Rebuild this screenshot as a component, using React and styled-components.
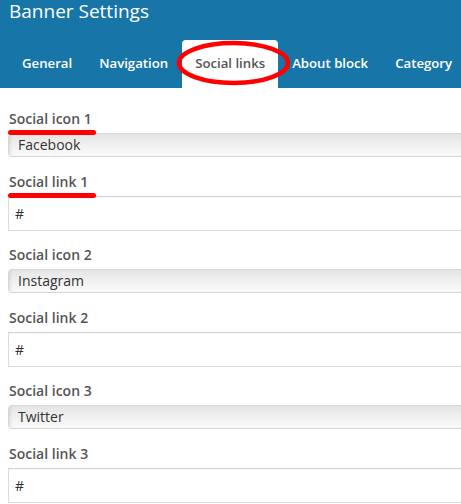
import styled, { createGlobalStyle } from "styled-components";

const GlobalStyle = createGlobalStyle`
  html, body {
    margin: 0;
    padding: 0;
    background: #fff;
    overflow: hidden;
  }
  body {
    font-family: "Open Sans", "DejaVu Sans", sans-serif;
  }
`;

const Header = styled.header`
  position: relative;
  background-color: #1775a8;
  height: 88px;
`;

const Title = styled.h1`
  margin: 0;
  padding: 1px 0 0 9px;
  font-size: 19px;
  line-height: 21px;
  font-weight: 400;
  color: #fff;
  white-space: nowrap;
`;

const Tabs = styled.nav`
  display: flex;
  gap: 1px;
  margin-top: 18px;
  padding-left: 9px;
  white-space: nowrap;
`;

const Tab = styled.a`
  display: block;
  height: 48px;
  box-sizing: border-box;
  padding: 0 13px 2px;
  line-height: 46px;
  font-size: 13.2px;
  font-weight: 600;
  text-decoration: none;
  border-radius: 4px 4px 0 0;
  color: ${(p) => (p.$active ? "#555" : "#fff")};
  background: ${(p) => (p.$active ? "#fff" : "transparent")};
`;

const Circle = styled.svg`
  position: absolute;
  left: 175px;
  top: 39px;
  pointer-events: none;
`;

const Form = styled.form`
  width: 700px;
  padding: 21px 0 0 8px;
`;

const Field = styled.div`
  margin-bottom: ${(p) => (p.$select ? "15px" : "14px")};
`;

const Label = styled.label`
  position: relative;
  display: block;
  padding-left: 1px;
  margin-bottom: 4px;
  height: 20px;
  line-height: 20px;
  font-size: 14px;
  font-weight: 600;
  color: #555;

  ${(p) =>
    p.$marked &&
    `
    &::after {
      content: "";
      position: absolute;
      left: 0;
      top: 21px;
      width: 88px;
      height: 4.5px;
      border-radius: 3px;
      background: #f00;
      z-index: 2;
    }
  `}
`;

const Select = styled.div`
  box-sizing: border-box;
  height: 24px;
  padding-left: 9px;
  line-height: 22px;
  font-size: 14px;
  color: #333;
  border: 1px solid #d6d6d6;
  border-radius: 4px 0 0 4px;
  background: linear-gradient(#e5e5e5, #fbfbfb);
  box-shadow: inset 3px 0 3px -1px rgba(0, 0, 0, 0.08);
`;

const Input = styled.div`
  box-sizing: border-box;
  height: 35px;
  padding-left: 6px;
  line-height: 33px;
  font-size: 14px;
  color: #333;
  border: 1px solid #dcdcdc;
  border-top-color: #d2d2d2;
  background: #fff;
  box-shadow: inset 0 1px 2px rgba(0, 0, 0, 0.04);
`;

const tabs = ["General", "Navigation", "Social links", "About block", "Category"];

const socials = [
  { icon: "Facebook", marked: true },
  { icon: "Instagram" },
  { icon: "Twitter" },
];

export default function App() {
  return (
    <>
      <GlobalStyle />
      <Header>
        <Title>Banner Settings</Title>
        <Tabs>
          {tabs.map((t) => (
            <Tab key={t} $active={t === "Social links"}>
              {t}
            </Tab>
          ))}
        </Tabs>
        <Circle width="118" height="50" viewBox="0 0 118 50">
          <ellipse
            cx="58.5"
            cy="24"
            rx="54.5"
            ry="20"
            fill="none"
            stroke="#f00"
            strokeWidth="4.5"
          />
        </Circle>
      </Header>
      <Form>
        {socials.map((s, i) => (
          <div key={s.icon}>
            <Field $select>
              <Label $marked={s.marked}>Social icon {i + 1}</Label>
              <Select>{s.icon}</Select>
            </Field>
            <Field>
              <Label $marked={s.marked}>Social link {i + 1}</Label>
              <Input>#</Input>
            </Field>
          </div>
        ))}
      </Form>
    </>
  );
}
